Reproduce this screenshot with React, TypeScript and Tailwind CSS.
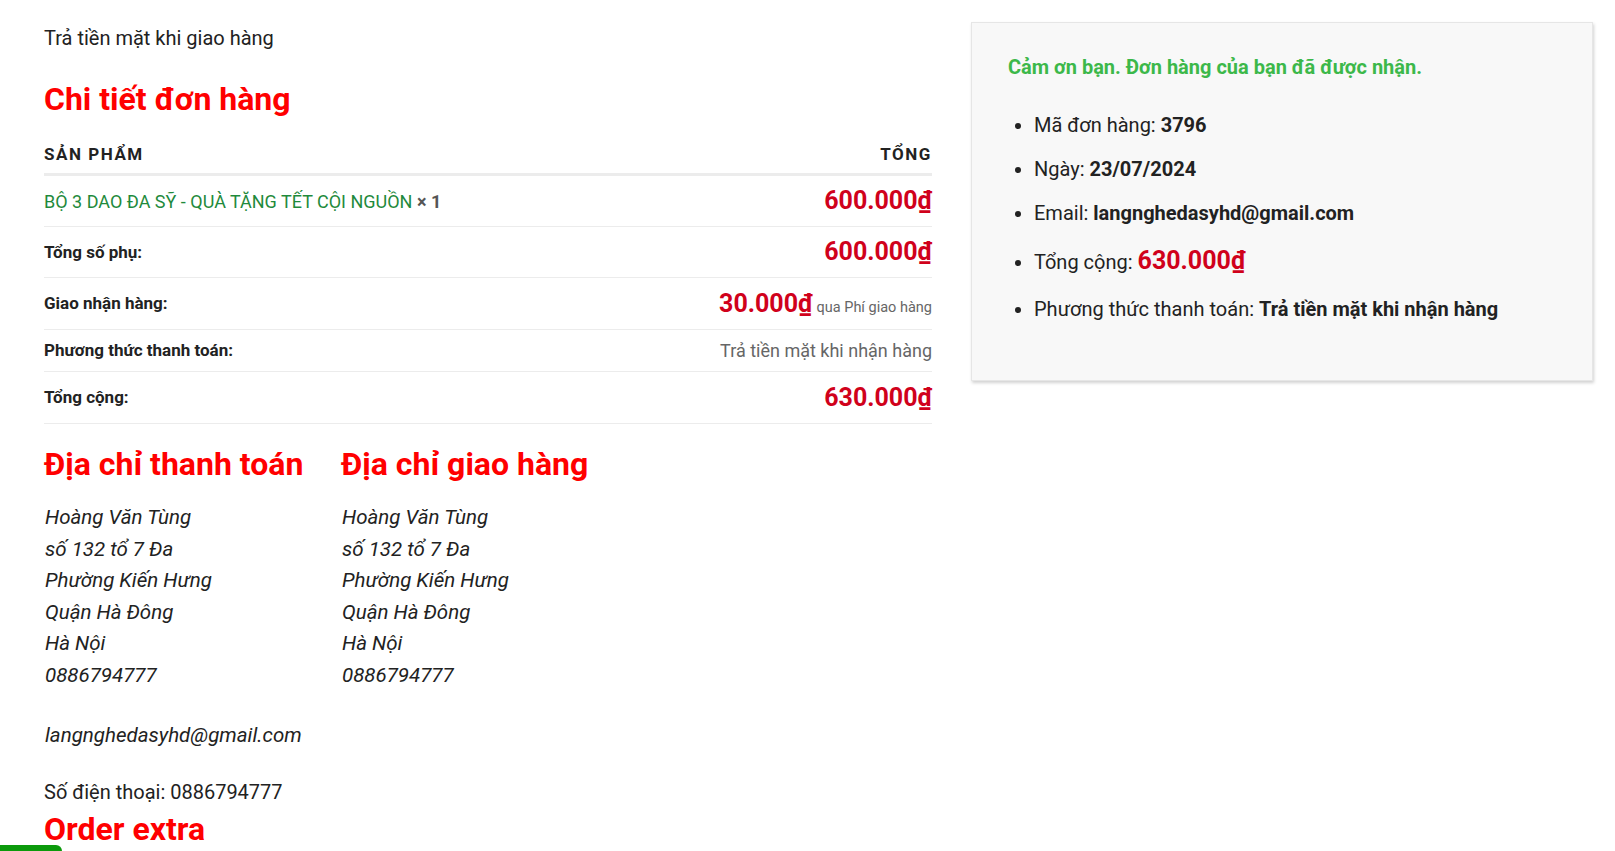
import React from "react";

const price = "text-[#d0011b] font-bold";

function Row({
  label,
  children,
  size = "md",
}: {
  label: string;
  children: React.ReactNode;
  size?: "sm" | "md" | "lg";
}) {
  const cell =
    size === "sm" ? "text-[18px] leading-[25px]" : size === "lg" ? "text-[25px] leading-[35px]" : "text-[25px] leading-[34px]";
  return (
    <tr className="border-b border-[#ececec]">
      <th className="py-2 text-left align-middle text-[17px] font-bold leading-[25px] text-[#222]">{label}</th>
      <td className={`py-2 text-right align-middle ${cell}`}>{children}</td>
    </tr>
  );
}

function Address() {
  return (
    <address className="text-[20.5px] italic leading-[31.6px] text-[#222]">
      Hoàng Văn Tùng
      <br />
      số 132 tổ 7 Đa
      <br />
      Phường Kiến Hưng
      <br />
      Quận Hà Đông
      <br />
      Hà Nội
      <br />
      0886794777
    </address>
  );
}

export default function App() {
  return (
    <div className="relative min-h-screen bg-white [font-family:Roboto,'Liberation_Sans',sans-serif] text-[#222]">
      <div className="flex items-start pl-[44px] pt-[22px]">
        {/* cột trái */}
        <div className="w-[888px]">
          <p className="mt-[1px] text-[20px] leading-[30px]">Trả tiền mặt khi giao hàng</p>

          <h2 className="mt-[26px] text-[32px] font-bold leading-[40px] text-[#ff0000]">Chi tiết đơn hàng</h2>

          <table className="mt-[15px] w-full border-collapse">
            <thead>
              <tr className="border-b-[3px] border-[#ececec]">
                <th className="pb-[7px] pt-2 text-left text-[17px] font-bold uppercase leading-[24px] tracking-[0.09em]">Sản phẩm</th>
                <th className="pb-[7px] pt-2 text-right text-[17px] font-bold uppercase leading-[24px] tracking-[0.09em]">Tổng</th>
              </tr>
            </thead>
            <tbody>
              <tr className="border-b border-[#ececec]">
                <td className="py-2 align-middle text-[18px] leading-[27px] text-[#1f8a3c]">
                  BỘ 3 DAO ĐA SỸ - QUÀ TẶNG TẾT CỘI NGUỒN <strong className="text-[#555]">× 1</strong>
                </td>
                <td className="py-2 text-right align-middle text-[25px] leading-[34px]">
                  <span className={price}>600.000₫</span>
                </td>
              </tr>
              <Row label="Tổng số phụ:">
                <span className={price}>600.000₫</span>
              </Row>
              <Row label="Giao nhận hàng:" size="lg">
                <span className={price}>30.000₫</span>
                <small className="ml-1 text-[14.5px] leading-none text-[#666]">qua Phí giao hàng</small>
              </Row>
              <Row label="Phương thức thanh toán:" size="sm">
                <span className="text-[#666]">Trả tiền mặt khi nhận hàng</span>
              </Row>
              <Row label="Tổng cộng:" size="lg">
                <span className={price}>630.000₫</span>
              </Row>
            </tbody>
          </table>

          <div className="mt-[20px] flex">
            <div className="w-[297px]">
              <h2 className="text-[32px] font-bold leading-[40px] text-[#ff0000]">Địa chỉ thanh toán</h2>
              <div className="mt-[18px] pl-px">
                <Address />
              </div>
            </div>
            <div>
              <h2 className="text-[32px] font-bold leading-[40px] text-[#ff0000]">Địa chỉ giao hàng</h2>
              <div className="mt-[18px] pl-px">
                <Address />
              </div>
            </div>
          </div>

          <p className="mt-[28px] pl-px text-[20.5px] italic leading-[31.6px]">langnghedasyhd@gmail.com</p>
          <p className="mt-[26px] text-[20px] leading-[31.6px]">Số điện thoại: 0886794777</p>
          <h2 className="text-[32px] font-bold leading-[40px] text-[#ff0000]">Order extra</h2>
        </div>

        {/* khung cảm ơn */}
        <div className="ml-[39px] w-[622px] border border-[#e6e6e6] bg-[#f8f8f8] pb-[56px] pl-[36px] pr-[36px] pt-[29px] shadow-[1px_2px_3px_rgba(0,0,0,0.18)]">
          <p className="text-[20px] font-bold leading-[30px] text-[#3cb84a]">Cảm ơn bạn. Đơn hàng của bạn đã được nhận.</p>
          <ul className="mt-[28px] list-disc space-y-[14px] pl-[26px] text-[20px] leading-[30px]">
            <li>
              Mã đơn hàng: <strong>3796</strong>
            </li>
            <li>
              Ngày: <strong>23/07/2024</strong>
            </li>
            <li>
              Email: <strong>langnghedasyhd@gmail.com</strong>
            </li>
            <li>
              Tổng cộng: <strong className={`${price} text-[25px] leading-[37.5px]`}>630.000₫</strong>
            </li>
            <li>
              Phương thức thanh toán: <strong>Trả tiền mặt khi nhận hàng</strong>
            </li>
          </ul>
        </div>
      </div>

      {/* nút nổi góc trái */}
      <div className="fixed bottom-0 left-0 h-[6px] w-[62px] rounded-tr-[8px] bg-[#0c9a0c]" />
    </div>
  );
}
